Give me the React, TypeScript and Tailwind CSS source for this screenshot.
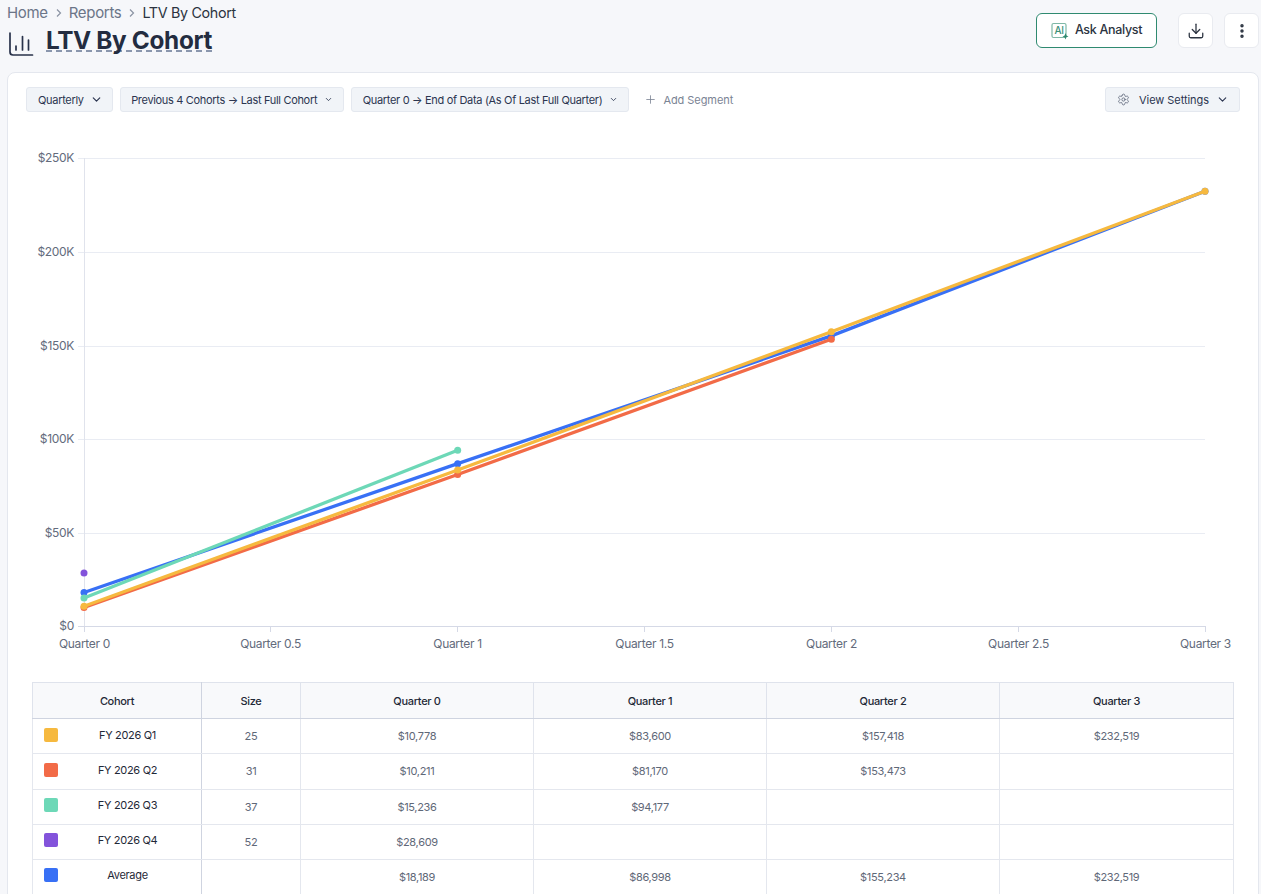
import { ChevronDown, Download, EllipsisVertical, Plus, Settings } from 'lucide-react';

const X = [84, 457.67, 831.33, 1205];
const yOf = (v: number) => 626.5 - (v / 250000) * 468;

const series = [
  { name: 'Average', color: '#3870f5', values: [18189, 86998, 155234, 232519] },
  { name: 'FY 2026 Q4', color: '#8353db', values: [28609] },
  { name: 'FY 2026 Q3', color: '#6dd8b7', values: [15236, 94177] },
  { name: 'FY 2026 Q2', color: '#f26b47', values: [10211, 81170, 153473] },
  { name: 'FY 2026 Q1', color: '#f6b93f', values: [10778, 83600, 157418, 232519] },
];

const rows = [
  { name: 'FY 2026 Q1', swatch: 'bg-[#f6b93f]', size: '25', cells: ['$10,778', '$83,600', '$157,418', '$232,519'], h: 'h-[35px]', lift: 'mb-[1px]' },
  { name: 'FY 2026 Q2', swatch: 'bg-[#f26b47]', size: '31', cells: ['$10,211', '$81,170', '$153,473', ''], h: 'h-[36px]', lift: 'mb-[2px]' },
  { name: 'FY 2026 Q3', swatch: 'bg-[#6dd8b7]', size: '37', cells: ['$15,236', '$94,177', '', ''], h: 'h-[35px]', lift: 'mb-[3px]' },
  { name: 'FY 2026 Q4', swatch: 'bg-[#8353db]', size: '52', cells: ['$28,609', '', '', ''], h: 'h-[35px]', lift: 'mb-[3px]' },
  { name: 'Average', swatch: 'bg-[#3870f5]', size: '', cells: ['$18,189', '$86,998', '$155,234', '$232,519'], h: 'h-[35px]', lift: 'mb-[3px]' },
];

function Chart() {
  const yTicks = [0, 50, 100, 150, 200, 250];
  const xTicks = ['Quarter 0', 'Quarter 0.5', 'Quarter 1', 'Quarter 1.5', 'Quarter 2', 'Quarter 2.5', 'Quarter 3'];
  return (
    <svg viewBox="8 112 1250 570" className="block h-[570px] w-[1250px]">
      {yTicks.map((t) => {
        const y = Math.ceil(626 - t * 1.872) + 0.5;
        return (
          <g key={t}>
            <line x1={78} x2={1205} y1={y} y2={y} stroke={t === 0 ? '#d5d9e6' : '#e9ecf3'} strokeWidth={1} />
            <text x={74} y={y + 3.5} textAnchor="end" fontSize={12} fill="#636b7c">
              {t === 0 ? '$0' : `$${t}K`}
            </text>
          </g>
        );
      })}
      <line x1={84.5} x2={84.5} y1={158} y2={632} stroke="#e0e3ec" />
      {xTicks.map((t, i) => {
        const x = Math.floor(84 + (i * 1121) / 6) + 0.5;
        return (
          <g key={t}>
            <line x1={x} x2={x} y1={626} y2={632} stroke="#d5d9e6" />
            <text x={x} y={648} textAnchor="middle" fontSize={12} fill="#636b7c">
              {t}
            </text>
          </g>
        );
      })}
      {series.map((s) => (
        <g key={s.name}>
          <polyline
            points={s.values.map((v, i) => `${X[i]},${yOf(v)}`).join(' ')}
            fill="none"
            stroke={s.color}
            strokeWidth={3.3}
          />
          {s.values.map((v, i) => (
            <circle key={i} cx={X[i]} cy={yOf(v)} r={3.5} fill={s.color} />
          ))}
        </g>
      ))}
    </svg>
  );
}

function Pill({ label, small }: { label: string; small?: boolean }) {
  return (
    <button className={`flex h-[25px] items-center rounded-[3px] border border-[#e4e8ef] bg-[#f1f4f8] pt-[2px] text-[11px] text-[#2b3550] ${small ? 'pl-[10.5px] pr-[10px]' : 'pl-[11px] pr-[9px]'}`}>
      <span>{label}</span>
      <ChevronDown className={small ? '-mt-[2px] ml-[7px] size-[9px]' : '-mt-[2px] ml-[6px] size-[13px]'} strokeWidth={2.2} />
    </button>
  );
}

export default function App() {
  return (
    <div className="h-[894px] overflow-hidden bg-[#f6f7fa] pl-[7px] pr-[2px] font-['Inter',sans-serif] tracking-[-0.02em]">
      {/* header */}
      <div className="flex h-[72px] justify-between">
        <div>
          <div className="flex h-[26px] items-center gap-[3px] text-[15px]">
            <span className="text-[#6b7588]">Home</span>
            <svg width="15" height="14" viewBox="0 0 15 14" fill="none" stroke="#8b93a3" strokeWidth="1.2"><path d="M6 3.5 9.5 7 6 10.5" /></svg>
            <span className="text-[#6b7588]">Reports</span>
            <svg width="15" height="14" viewBox="0 0 15 14" fill="none" stroke="#8b93a3" strokeWidth="1.2"><path d="M6 3.5 9.5 7 6 10.5" /></svg>
            <span className="text-[14.3px] text-[#2b3340]">LTV By Cohort</span>
          </div>
          <div className="mt-[1px] flex items-start pl-[1px]">
            <svg width="26" height="30" viewBox="0 0 26 30" fill="none" stroke="#28324a" strokeWidth="1.7" strokeLinecap="round">
              <path d="M2 6v19a3 3 0 0 0 3 3h19.5" />
              <path d="M8 19v4M14.5 9.5V23M20.5 13v10" />
            </svg>
            <span className="ml-[12px] text-[24.3px] leading-[26px] font-bold text-[#232c40] underline decoration-[#8a96ad] decoration-dashed decoration-[1.5px] underline-offset-[1px] [text-decoration-skip-ink:none]">
              LTV By Cohort
            </span>
          </div>
        </div>
        <div className="flex items-start pt-[13px]">
          <button className="flex h-[35px] w-[121px] items-center justify-center gap-[6px] rounded-[6px] border border-[#2f8a70] bg-white text-[12.5px] font-medium text-[#2b3340]">
            <svg width="18" height="18" viewBox="0 0 18 18" fill="none">
              <rect x="1" y="1.5" width="14" height="14" rx="1.5" stroke="#7fb8a6" strokeWidth="1.2" />
              <text x="3.4" y="12.2" fontSize="10" fontWeight="500" fill="#3d8f78">AI</text>
              <path d="M14.5 11 15.4 13.6l2.1.8-2.1.8-.9 2.3-.9-2.3-2.1-.8 2.1-.8z" fill="#2f8a70" />
            </svg>
            Ask Analyst
          </button>
          <button className="ml-[21px] flex size-[35px] items-center justify-center rounded-[6px] border border-[#e9ebf0] bg-white text-[#2b3340]">
            <Download className="size-[18px]" strokeWidth={1.7} />
          </button>
          <button className="ml-[11px] flex size-[35px] items-center justify-center rounded-[6px] border border-[#e9ebf0] bg-white text-[#2b3340]">
            <EllipsisVertical className="size-[18px]" strokeWidth={2.6} />
          </button>
        </div>
      </div>

      {/* card */}
      <div className="h-[900px] rounded-t-[8px] border border-[#e4e7ee] bg-white">
        <div className="flex items-center justify-between pt-[14px] pl-[18px] pr-[18px]">
          <div className="flex items-center gap-[7px]">
            <Pill label="Quarterly" />
            <Pill label="Previous 4 Cohorts → Last Full Cohort" small />
            <Pill label="Quarter 0 → End of Data (As Of Last Full Quarter)" small />
            <div className="ml-[8px] flex items-center gap-[6px] pt-[2px] text-[11px] tracking-[-0.005em] text-[#7b8494]">
              <Plus className="-mt-[2px] size-[13px]" strokeWidth={1.5} />
              Add Segment
            </div>
          </div>
          <button className="flex h-[25px] items-center rounded-[3px] border border-[#e4e8ef] bg-[#f1f4f8] pt-[2px] pl-[11px] pr-[10px] text-[11px] tracking-[-0.005em] text-[#2b3550]">
            <Settings className="-mt-[2px] mr-[9px] size-[13px] text-[#5b6478]" strokeWidth={1.5} />
            View Settings
            <ChevronDown className="-mt-[2px] ml-[7px] size-[13px]" strokeWidth={2} />
          </button>
        </div>

        <Chart />

        <table className="ml-[24px] w-[1201px] table-fixed border-collapse text-[11px]">
          <colgroup>
            <col className="w-[169px]" />
            <col className="w-[99px]" />
            <col className="w-[233px]" />
            <col className="w-[233px]" />
            <col className="w-[233px]" />
            <col className="w-[234px]" />
          </colgroup>
          <thead>
            <tr className="h-[36px] bg-[#f8f9fb] text-[#1f2937]">
              {['Cohort', 'Size', 'Quarter 0', 'Quarter 1', 'Quarter 2', 'Quarter 3'].map((h, i) => (
                <th key={h} className={`border border-[#dfe3ec] border-b-[#cfd4e0] pt-[2px] font-medium ${i === 0 ? 'border-r-[#cfd4e0]' : ''}`}>
                  {h}
                </th>
              ))}
            </tr>
          </thead>
          <tbody>
            {rows.map((r) => (
              <tr key={r.name} className={r.h}>
                <td className="border border-[#e4e7ee] border-r-[#cfd4e0] text-[#1f2937]">
                  <div className={`flex items-center pl-[11px] ${r.lift}`}>
                    <span className={`size-[14px] shrink-0 -translate-y-px rounded-[2px] ${r.swatch}`} />
                    <span className="w-[139px] text-center">{r.name}</span>
                  </div>
                </td>
                <td className="border border-[#e4e7ee] text-center text-[#5f6878]">{r.size}</td>
                {r.cells.map((c, i) => (
                  <td key={i} className="border border-[#e4e7ee] text-center text-[#5f6878]">
                    {c}
                  </td>
                ))}
              </tr>
            ))}
          </tbody>
        </table>
      </div>
    </div>
  );
}
